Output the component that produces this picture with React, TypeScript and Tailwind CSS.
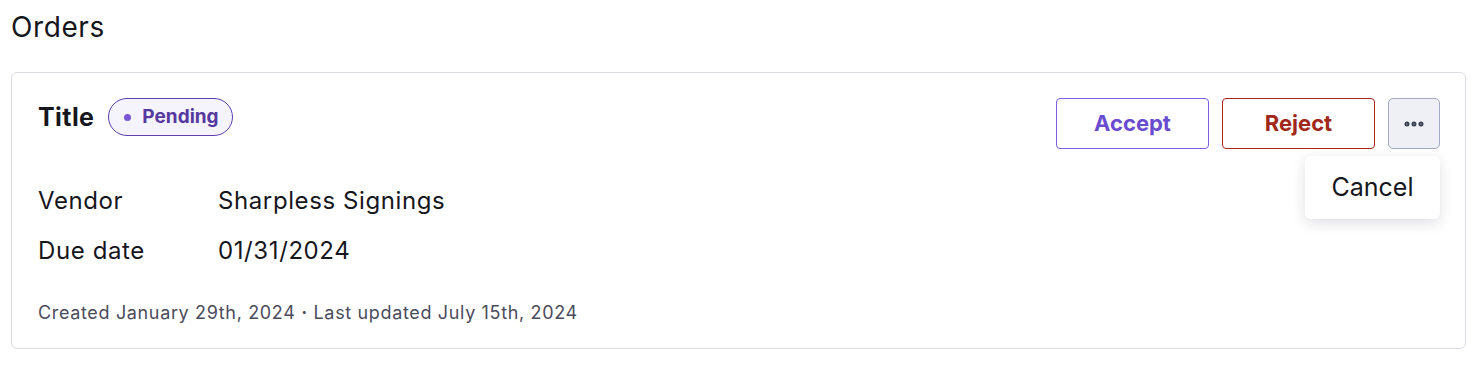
import { MoreHorizontal } from 'lucide-react'

const DETAILS = [
  { label: 'Vendor', value: 'Sharpless Signings' },
  { label: 'Due date', value: '01/31/2024' },
]

export default function App() {
  return (
    <div
      className="min-h-[366px] bg-white px-[11px] pt-[10px] text-[#16161d]"
      style={{ fontFamily: 'Inter, "Liberation Sans", sans-serif' }}
    >
      <h1 className="text-[28px] leading-[34px] font-normal tracking-[0.6px]">Orders</h1>

      <div className="mt-[28px] w-[1455px] rounded-[6px] border border-[#dcdbe8] pl-[26px] pr-[25px] pt-[25px] pb-[23px]">
        {/* header */}
        <div className="flex items-start justify-between">
          <div className="flex items-center gap-[14px]">
            <span className="text-[25px] leading-[38px] font-bold tracking-[0.4px]">Title</span>
            <span className="flex h-[38px] items-center gap-[11px] rounded-full border border-[#5a3fae] bg-[#f5f3fc] pl-[15px] pr-[13px] text-[19px] font-bold text-[#55399f]">
              <span className="h-[7px] w-[7px] rounded-full bg-[#7a56d6]" />
              Pending
            </span>
          </div>

          <div className="relative flex gap-[13px]">
            <button className="h-[51px] w-[153px] rounded-[4px] border border-[#7c5ce0] bg-white text-[22px] font-bold text-[#6a4cd0]">
              Accept
            </button>
            <button className="h-[51px] w-[153px] rounded-[4px] border border-[#a8261a] bg-white text-[22px] font-bold text-[#a02818]">
              Reject
            </button>
            <button className="flex h-[51px] w-[52px] items-center justify-center rounded-[5px] border border-[#a3a9c2] bg-[#eef0f5] text-[#3b3f52]">
              <MoreHorizontal size={24} strokeWidth={3} />
            </button>

            {/* dropdown */}
            <div className="absolute right-0 top-[58px] z-10 flex h-[63px] w-[135px] items-center justify-center rounded-[6px] bg-white text-[25px] shadow-[0_4px_14px_rgba(30,30,60,0.14)]">
              Cancel
            </div>
          </div>
        </div>

        {/* details */}
        <div className="mt-[34px] flex flex-col gap-[14px] text-[24px] leading-[36px] tracking-[0.6px]">
          {DETAILS.map((d) => (
            <div key={d.label} className="flex">
              <span className="w-[180px] shrink-0">{d.label}</span>
              <span>{d.value}</span>
            </div>
          ))}
        </div>

        <p className="mt-[32px] text-[18px] leading-[24px] tracking-[0.65px] text-[#4b4b5c]">
          Created January 29th, 2024 <span className="font-bold">·</span> Last updated July 15th, 2024
        </p>
      </div>
    </div>
  )
}
